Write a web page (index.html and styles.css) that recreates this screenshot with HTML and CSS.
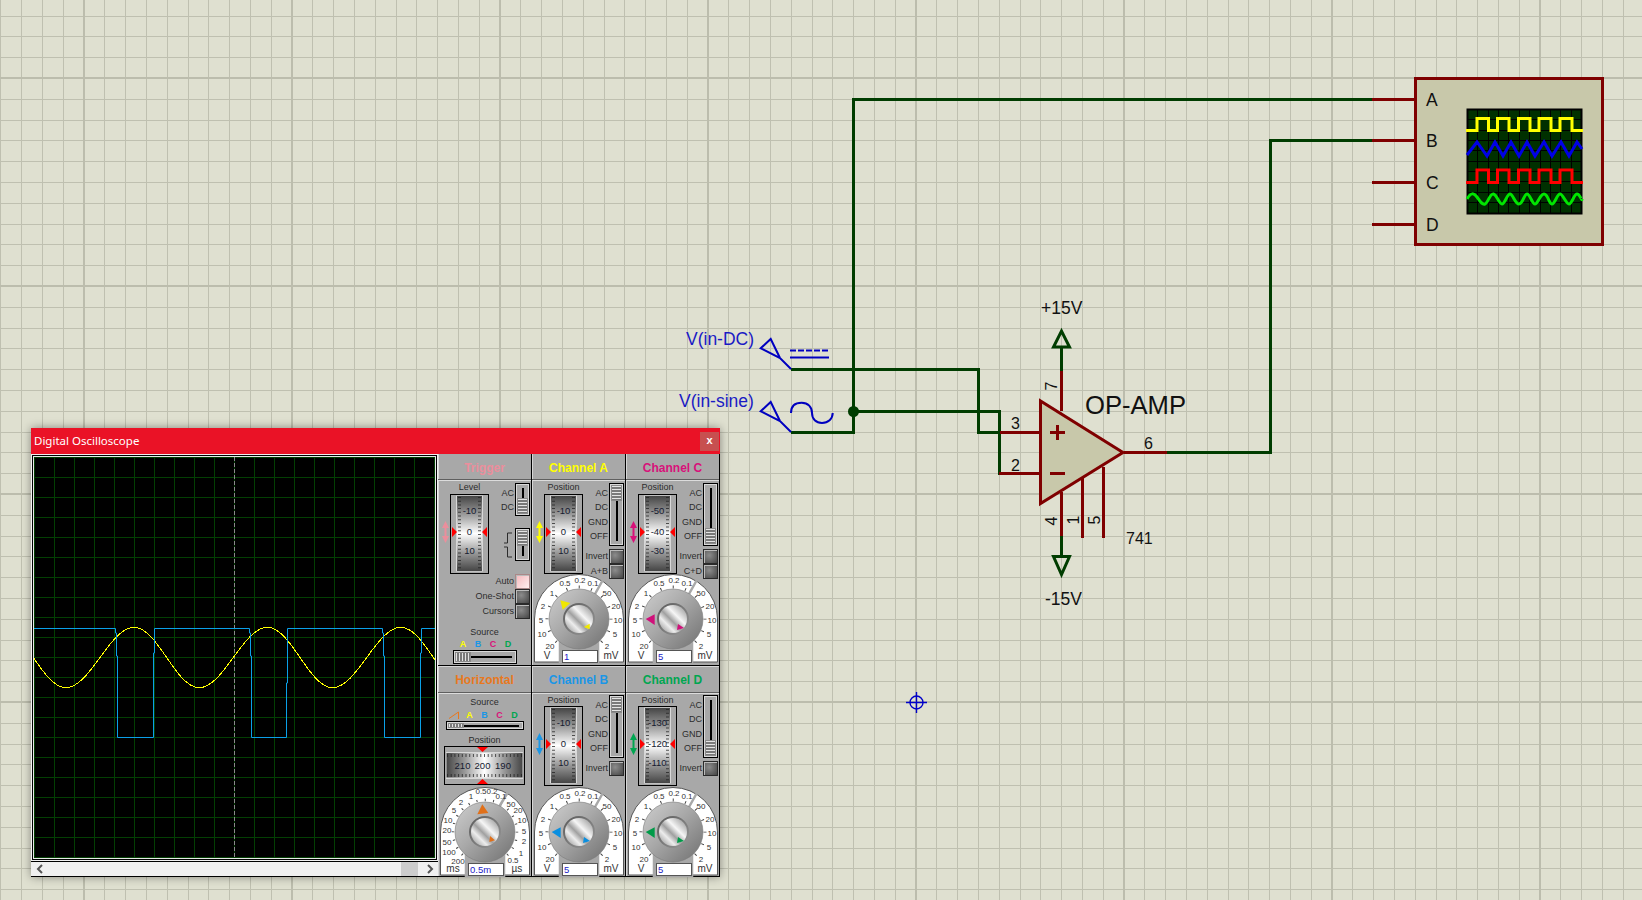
FILE: index.html
```html
<!DOCTYPE html>
<html lang="en">
<head>
<meta charset="utf-8">
<title>Digital Oscilloscope</title>
<link rel="stylesheet" href="styles.css">
</head>
<body class="app">

<svg class="defs" width="0" height="0" aria-hidden="true">
  <defs>
    <pattern id="sheet-grid" width="208" height="208" patternUnits="userSpaceOnUse">
      <path class="grid-minor" d="M.5 0V208M21.5 0V208M42.5 0V208M63.5 0V208M104.5 0V208M125.5 0V208M146.5 0V208M167.5 0V208M188.5 0V208"/>
      <path class="grid-minor" d="M0 16.5H208M0 36.5H208M0 57.5H208M0 99.5H208M0 120.5H208M0 140.5H208M0 161.5H208M0 182.5H208M0 203.5H208"/>
      <path class="grid-major" d="M84 0V208M0 78H208"/>
    </pattern>
    <pattern id="scope-grid" width="20" height="20" patternUnits="userSpaceOnUse">
      <path class="scope-line" d="M.5 0V20M0 .5H20"/>
    </pattern>
    <linearGradient id="roll-v" x1="0" y1="0" x2="0" y2="1">
      <stop offset="0" stop-color="#454545"/><stop offset=".25" stop-color="#9c9c9c"/>
      <stop offset=".5" stop-color="#ffffff"/><stop offset=".75" stop-color="#9c9c9c"/>
      <stop offset="1" stop-color="#454545"/>
    </linearGradient>
    <linearGradient id="roll-h" x1="0" y1="0" x2="1" y2="0">
      <stop offset="0" stop-color="#454545"/><stop offset=".25" stop-color="#9c9c9c"/>
      <stop offset=".5" stop-color="#ffffff"/><stop offset=".75" stop-color="#9c9c9c"/>
      <stop offset="1" stop-color="#454545"/>
    </linearGradient>
    <linearGradient id="knob-body" x1="0" y1="0" x2="1" y2="1">
      <stop offset="0" stop-color="#cfcfcf"/><stop offset=".45" stop-color="#a8a8a8"/>
      <stop offset=".85" stop-color="#7f7f7f"/><stop offset="1" stop-color="#9a9a9a"/>
    </linearGradient>
    <linearGradient id="knob-ring" x1="0" y1="0" x2="1" y2="1">
      <stop offset="0" stop-color="#5a5a5a"/><stop offset="1" stop-color="#9a9a9a"/>
    </linearGradient>
    <linearGradient id="knob-cap" x1="0" y1="1" x2="1" y2="0">
      <stop offset="0" stop-color="#808080"/><stop offset=".3" stop-color="#ededed"/>
      <stop offset=".45" stop-color="#a0a0a0"/><stop offset=".62" stop-color="#f6f6f6"/>
      <stop offset="1" stop-color="#858585"/>
    </linearGradient>

    <g id="roller">
      <rect class="frame-out" x=".5" y=".5" width="38" height="79"/>
      <rect class="frame-in" x="6" y="1.5" width="27" height="76"/>
      <rect x="7" y="2" width="25" height="75" fill="url(#roll-v)"/>
      <line class="roll-tick" x1="9.500" y1="3" x2="9.500" y2="76"/>
      <line class="roll-tick" x1="29.500" y1="3" x2="29.500" y2="76"/>
      <path class="red" d="M2 33V43L7 38ZM37 33V43L32 38Z"/>
    </g>

    <g id="knob">
      <circle cx="46" cy="47" r="30" fill="url(#knob-body)" stroke="#7a7a7a" stroke-width=".6"/>
      <circle cx="46" cy="47" r="16" fill="url(#knob-ring)"/>
      <circle cx="46" cy="47" r="14" fill="url(#knob-cap)"/>
    </g>

    <g id="dial-volts">
      <path class="dial-face" d="M1.5 90V47A44.5 44.5 0 0 1 90.5 47V90Z"/>
      <circle class="dial-ticks" cx="46" cy="47" r="32"/>
      <path class="dial-gap" d="M27 91V66H65V91ZM62 22L71 6" />
      <text class="dial-txt" x="47" y="11">0.2</text><text class="dial-txt" x="32" y="14">0.5</text>
      <text class="dial-txt" x="60" y="14">0.1</text><text class="dial-txt" x="19" y="24">1</text>
      <text class="dial-txt" x="10" y="37">2</text><text class="dial-txt" x="8" y="51">5</text>
      <text class="dial-txt" x="9" y="65">10</text><text class="dial-txt" x="17" y="77">20</text>
      <text class="dial-txt" x="74" y="24">50</text><text class="dial-txt" x="83" y="37">20</text>
      <text class="dial-txt" x="85" y="51">10</text><text class="dial-txt" x="82" y="65">5</text>
      <text class="dial-txt" x="74" y="77">2</text>
      <text class="dial-unit" x="14" y="87">V</text><text class="dial-unit" x="78" y="87">mV</text>
      <use href="#knob"/>
    </g>

    <g id="dial-time">
      <path class="dial-face" d="M1.5 90V47A44.5 44.5 0 0 1 90.5 47V90Z"/>
      <circle class="dial-ticks-fine" cx="46" cy="47" r="32"/>
      <path class="dial-gap" d="M27 91V66H65V91ZM60 22L69 7" />
      <text class="dial-txt" x="42" y="9">0.5</text><text class="dial-txt" x="53" y="9">0.2</text>
      <text class="dial-txt" x="62" y="14">0.1</text><text class="dial-txt" x="32" y="14">1</text>
      <text class="dial-txt" x="22" y="20">2</text><text class="dial-txt" x="15" y="28">5</text>
      <text class="dial-txt" x="9" y="38">10</text><text class="dial-txt" x="8" y="48">20</text>
      <text class="dial-txt" x="8" y="60">50</text><text class="dial-txt" x="10" y="70">100</text>
      <text class="dial-txt" x="19" y="79">200</text>
      <text class="dial-txt" x="72" y="22">50</text><text class="dial-txt" x="79" y="28">20</text>
      <text class="dial-txt" x="83" y="38">10</text><text class="dial-txt" x="85" y="49">5</text>
      <text class="dial-txt" x="85" y="59">2</text><text class="dial-txt" x="82" y="71">1</text>
      <text class="dial-txt" x="74" y="78">0.5</text>
      <text class="dial-unit" x="14" y="87">ms</text><text class="dial-unit" x="78" y="87">µs</text>
      <use href="#knob"/>
    </g>

    <g id="value-box">
      <rect class="value-box" x="29.5" y="78.5" width="35" height="12"/>
    </g>

    <path id="updown" d="M3.5 0L7 7H4.5V15H7L3.5 22L0 15H2.5V7H0Z"/>
  </defs>
</svg>

<svg class="schematic" viewBox="0 0 1642 900" width="1642" height="900">
  <rect width="1642" height="900" fill="url(#sheet-grid)"/>

  <g class="wire">
    <path d="M1372 99.5H853.5V432.5H791"/>
    <path d="M1372 140.5H1270.5V452.5H1167"/>
    <path d="M791 369.5H978.5V432.5H1000"/>
    <path d="M853.5 411.5H999.5V473.5H1000"/>
    <path d="M1061.5 371V347M1053.5 347H1069.5L1061.5 331Z"/>
    <path d="M1061.5 536V556.5M1053.5 556.5H1069.5L1061.5 574.5Z"/>
  </g>
  <circle cx="853.5" cy="411.5" r="5.5" class="junction"/>

  <g class="part">
    <rect x="1415.5" y="78.5" width="187" height="166"/>
    <path d="M1040.5 401V503.5L1123 452.5Z"/>
  </g>
  <g class="pin">
    <path d="M1372 99.5H1415M1372 140.5H1415M1372 182.5H1415M1372 224.5H1415"/>
    <path d="M1000 432.5H1040M999 473.5H1040M1124 452.5H1167"/>
    <path d="M1061.5 371V411M1061.5 492V536M1082.5 478V538M1103.5 467V538"/>
    <path d="M1050 432.5H1065M1057.5 425V440M1050 473.5H1065"/>
  </g>

  <rect class="la-screen" x="1467.5" y="109.5" width="114" height="104"/>
  <path class="la-grid" d="M1477.5 110V213M1488.5 110V213M1498.5 110V213M1508.5 110V213M1519.5 110V213M1529.5 110V213M1540.5 110V213M1550.5 110V213M1560.5 110V213M1571.5 110V213M1468 119.5H1581M1468 130.5H1581M1468 140.5H1581M1468 150.5H1581M1468 161.5H1581M1468 171.5H1581M1468 181.5H1581M1468 192.5H1581M1468 202.5H1581"/>
  <path class="trace t-yellow" d="M1466 130.5H1477V118.5H1488.5V130.5H1497.5V118.5H1509V130.5H1518.5V118.5H1530V130.5H1539V118.5H1551V130.5H1560V118.5H1572V130.5H1583"/>
  <path class="trace t-blue" d="M1467 155L1477 142L1487 156L1495 142L1503 156L1511 142L1519 156L1527 142L1535 156L1544 142L1552 156L1561 142L1569 156L1577 142L1582 149"/>
  <path class="trace t-red" d="M1466 182.5H1477V170H1488.5V182.5H1497.5V170H1509V182.5H1518.5V170H1530V182.5H1539V170H1551V182.5H1560V170H1572V182.5H1583"/>
  <path class="trace t-green" d="M1467 199C1471 192 1474 193 1477 197S1482 205 1485 204S1490 193 1493.5 194S1499 204 1502 204S1507 194 1510 194S1515 204 1519 204S1524 194 1527 194S1532 204 1535 204S1540 194 1544 194S1549 204 1552 204S1557 194 1560 194S1566 204 1569 204S1574 194 1577 194S1582 202 1582 199"/>

  <g class="blue-sym">
    <path d="M791 369L780 358L760.7 348.3L770.7 339L780 358"/>
    <path d="M791 432L780 421L760.7 411.3L770.7 402L780 421"/>
    <path d="M790 350.5H829" stroke-dasharray="6 2"/>
    <path d="M790 357.5H829"/>
    <path d="M791 413C791 405 796 402.7 801.7 402.7C808 402.7 812 407 812 413C812 419 816 423 822 423C828 423 832.7 419 832.7 413"/>
  </g>
  <text class="blue-label" x="686" y="345">V(in-DC)</text>
  <text class="blue-label" x="679" y="407">V(in-sine)</text>

  <text class="sch-label" x="1041" y="314">+15V</text>
  <text class="sch-label" x="1045" y="605">-15V</text>
  <text class="sch-title" x="1085" y="414">OP-AMP</text>
  <text class="sch-pin" x="1126" y="544">741</text>
  <text class="sch-pin" x="1011" y="429">3</text>
  <text class="sch-pin" x="1011" y="471">2</text>
  <text class="sch-pin" x="1144" y="449">6</text>
  <text class="sch-pin sch-mid" transform="translate(1057 386) rotate(-90)">7</text>
  <text class="sch-pin sch-mid" transform="translate(1057 521) rotate(-90)">4</text>
  <text class="sch-pin sch-mid" transform="translate(1079 520) rotate(-90)">1</text>
  <text class="sch-pin sch-mid" transform="translate(1100 520) rotate(-90)">5</text>
  <text class="sch-label" x="1426" y="106">A</text>
  <text class="sch-label" x="1426" y="147">B</text>
  <text class="sch-label" x="1426" y="189">C</text>
  <text class="sch-label" x="1426" y="231">D</text>

  <g class="cursor-mark">
    <circle cx="916.5" cy="702.5" r="6.5"/>
    <path d="M906 702.5H927M916.5 692V713"/>
  </g>
</svg>

<section class="scope-window">
  <header class="titlebar">
    <span class="title-text">Digital Oscilloscope</span>
    <span class="close-btn">x</span>
  </header>
  <div class="scope-body">
    <div class="screen-col">
      <div class="screen-frame">
        <svg class="screen" viewBox="0 0 401 401" width="401" height="401">
          <rect width="401" height="401" fill="#000"/>
          <rect width="401" height="401" fill="url(#scope-grid)"/>
          <path class="scope-line" d="M400.5 0V401M0 400.5H401"/>
          <path class="scope-center" d="M200.5 0V401"/>
          <path class="wave-a" d="M-33.4 170.3C-9.4 170.3 8 230.7 32 230.7S76 170.3 100 170.3S141.3 230.7 165.3 230.7S209.3 170.3 233.3 170.3S274.7 230.7 298.7 230.7S342.7 170.3 366.7 170.3S408 230.7 432 230.7"/>
          <path class="wave-b" d="M0 171.5H81.5V176H82.5V199H83.5V280.5H119.5V196H120.5V171.5H215.5V176H216.5V199H217.5V280.5H252.5V226H253.5V171.5H348.5V176H349.5V199H350.5V280.5H386.5V196H387.5V171.5H401"/>
        </svg>
      </div>
      <div class="scrollbar">
        <svg class="chev" viewBox="0 0 8 10" width="8" height="10"><path d="M6 1L2 5L6 9"/></svg>
        <span class="scroll-track"></span>
        <span class="scroll-thumb"></span>
        <svg class="chev" viewBox="0 0 8 10" width="8" height="10"><path d="M2 1L6 5L2 9"/></svg>
      </div>
    </div>

    <div class="panels">

      <article class="panel row1">
        <h2 class="panel-head c-trigger">Trigger</h2>
        <div class="trigger-body">
          <div class="controls controls-tall">
            <div class="arrow-col"><svg class="updown c-trigger" viewBox="0 0 7 22" width="7" height="22"><use href="#updown"/></svg></div>
            <div class="roller-col">
              <span class="cap">Level</span>
              <svg class="roller" viewBox="0 0 39 80" width="39" height="80">
                <use href="#roller"/>
                <text class="roll-num" x="19.5" y="20">-10</text>
                <text class="roll-num" x="19.5" y="41">0</text>
                <text class="roll-num" x="19.5" y="60">10</text>
              </svg>
            </div>
            <div class="side">
              <div class="side-top">
                <div class="mode-labels"><span>AC</span><span>DC</span></div>
                <div class="vslider vslider-short at-bottom"><span class="thumb"></span></div>
              </div>
              <div class="side-top edge-row">
                <svg class="edges" viewBox="0 0 8 26" width="8" height="26"><path d="M0 11H3.5V1H8M0 15H3.5V25H8"/></svg>
                <div class="vslider vslider-short"><span class="thumb"></span></div>
              </div>
              <div class="btn-row btn-first"><span class="btn-label">Auto</span><span class="btn btn-on"></span></div>
              <div class="btn-row"><span class="btn-label">One-Shot</span><span class="btn"></span></div>
              <div class="btn-row"><span class="btn-label">Cursors</span><span class="btn"></span></div>
            </div>
          </div>
          <div class="source">
            <span class="cap">Source</span>
            <div class="source-keys">
              <b class="c-a">A</b><b class="c-b">B</b><b class="c-c">C</b><b class="c-d">D</b>
            </div>
            <div class="hslider hslider-trig"><span class="thumb-h"></span></div>
          </div>
        </div>
      </article>

      <article class="panel row1">
        <h2 class="panel-head c-a">Channel A</h2>
        <div class="controls">
          <div class="arrow-col"><svg class="updown c-a" viewBox="0 0 7 22" width="7" height="22"><use href="#updown"/></svg></div>
          <div class="roller-col">
            <span class="cap">Position</span>
            <svg class="roller" viewBox="0 0 39 80" width="39" height="80">
              <use href="#roller"/>
              <text class="roll-num" x="19.5" y="20">-10</text>
              <text class="roll-num" x="19.5" y="41">0</text>
              <text class="roll-num" x="19.5" y="60">10</text>
            </svg>
          </div>
          <div class="side">
            <div class="side-top">
              <div class="mode-labels"><span>AC</span><span>DC</span><span>GND</span><span>OFF</span></div>
              <div class="vslider"><span class="thumb"></span></div>
            </div>
            <div class="btn-row btn-gap"><span class="btn-label">Invert</span><span class="btn"></span></div>
            <div class="btn-row"><span class="btn-label">A+B</span><span class="btn"></span></div>
          </div>
        </div>
        <svg class="dial" viewBox="0 0 92 91" width="92" height="91">
          <use href="#dial-volts"/><use href="#value-box"/>
          <text class="value-txt" x="31" y="88">1</text>
          <path class="c-a-fill" d="M27.3 28.3L37.3 31L29.7 37.7Z"/>
          <path class="c-a-fill" d="M50.7 55L56.7 51.7V57.3Z"/>
        </svg>
      </article>

      <article class="panel row1">
        <h2 class="panel-head c-c">Channel C</h2>
        <div class="controls">
          <div class="arrow-col"><svg class="updown c-c" viewBox="0 0 7 22" width="7" height="22"><use href="#updown"/></svg></div>
          <div class="roller-col">
            <span class="cap">Position</span>
            <svg class="roller" viewBox="0 0 39 80" width="39" height="80">
              <use href="#roller"/>
              <text class="roll-num" x="19.5" y="20">-50</text>
              <text class="roll-num" x="19.5" y="41">-40</text>
              <text class="roll-num" x="19.5" y="60">-30</text>
            </svg>
          </div>
          <div class="side">
            <div class="side-top">
              <div class="mode-labels"><span>AC</span><span>DC</span><span>GND</span><span>OFF</span></div>
              <div class="vslider at-bottom"><span class="thumb"></span></div>
            </div>
            <div class="btn-row btn-gap"><span class="btn-label">Invert</span><span class="btn"></span></div>
            <div class="btn-row"><span class="btn-label">C+D</span><span class="btn"></span></div>
          </div>
        </div>
        <svg class="dial" viewBox="0 0 92 91" width="92" height="91">
          <use href="#dial-volts"/><use href="#value-box"/>
          <text class="value-txt" x="31" y="88">5</text>
          <path class="c-c-fill" d="M18.7 47L27.7 42.3V53Z"/>
          <path class="c-c-fill" d="M51 52L57 56L50 58Z"/>
        </svg>
      </article>

      <article class="panel row2">
        <h2 class="panel-head c-h">Horizontal</h2>
        <div class="controls-h">
          <span class="cap">Source</span>
          <div class="source-keys source-keys-h">
            <svg class="ramp" viewBox="0 0 11 8" width="11" height="8"><path d="M0 7.5L9.5 1V8"/></svg>
            <b class="c-a">A</b><b class="c-b">B</b><b class="c-c">C</b><b class="c-d">D</b>
          </div>
          <div class="hslider hslider-time"><span class="thumb-h"></span></div>
          <span class="cap cap-pos">Position</span>
          <svg class="roller-h" viewBox="0 0 81 39" width="81" height="39">
            <rect class="frame-out" x=".5" y=".5" width="80" height="38"/>
            <rect class="frame-in" x="2" y="6" width="77" height="27"/>
            <rect x="2.5" y="7" width="76" height="24.5" fill="url(#roll-h)"/>
            <line class="roll-tick-h" x1="3" y1="9.5" x2="78" y2="9.5"/>
            <line class="roll-tick-h" x1="3" y1="29.5" x2="78" y2="29.5"/>
            <path class="red" d="M33 1H44L38.5 6ZM33 38H44L38.5 33Z"/>
            <text class="roll-num" x="18.5" y="23">210</text>
            <text class="roll-num" x="38.5" y="23">200</text>
            <text class="roll-num" x="59" y="23">190</text>
          </svg>
        </div>
        <svg class="dial" viewBox="0 0 92 91" width="92" height="91">
          <use href="#dial-time"/><use href="#value-box"/>
          <text class="value-txt" x="31" y="88">0.5m</text>
          <path class="c-h-fill" d="M43.3 19.3L38.3 29.3L49.3 28Z"/>
          <path class="c-h-fill" d="M51 51L56 55.3L50.3 57Z"/>
        </svg>
      </article>

      <article class="panel row2">
        <h2 class="panel-head c-b">Channel B</h2>
        <div class="controls">
          <div class="arrow-col"><svg class="updown c-b" viewBox="0 0 7 22" width="7" height="22"><use href="#updown"/></svg></div>
          <div class="roller-col">
            <span class="cap">Position</span>
            <svg class="roller" viewBox="0 0 39 80" width="39" height="80">
              <use href="#roller"/>
              <text class="roll-num" x="19.5" y="20">-10</text>
              <text class="roll-num" x="19.5" y="41">0</text>
              <text class="roll-num" x="19.5" y="60">10</text>
            </svg>
          </div>
          <div class="side">
            <div class="side-top">
              <div class="mode-labels"><span>AC</span><span>DC</span><span>GND</span><span>OFF</span></div>
              <div class="vslider"><span class="thumb"></span></div>
            </div>
            <div class="btn-row btn-gap"><span class="btn-label">Invert</span><span class="btn"></span></div>
          </div>
        </div>
        <svg class="dial" viewBox="0 0 92 91" width="92" height="91">
          <use href="#dial-volts"/><use href="#value-box"/>
          <text class="value-txt" x="31" y="88">5</text>
          <path class="c-b-fill" d="M18.7 47L27.7 42.3V53Z"/>
          <path class="c-b-fill" d="M51 52L57 56L50 58Z"/>
        </svg>
      </article>

      <article class="panel row2">
        <h2 class="panel-head c-d">Channel D</h2>
        <div class="controls">
          <div class="arrow-col"><svg class="updown c-d" viewBox="0 0 7 22" width="7" height="22"><use href="#updown"/></svg></div>
          <div class="roller-col">
            <span class="cap">Position</span>
            <svg class="roller" viewBox="0 0 39 80" width="39" height="80">
              <use href="#roller"/>
              <text class="roll-num" x="19.5" y="20">-130</text>
              <text class="roll-num" x="19.5" y="41">-120</text>
              <text class="roll-num" x="19.5" y="60">-110</text>
            </svg>
          </div>
          <div class="side">
            <div class="side-top">
              <div class="mode-labels"><span>AC</span><span>DC</span><span>GND</span><span>OFF</span></div>
              <div class="vslider at-bottom"><span class="thumb"></span></div>
            </div>
            <div class="btn-row btn-gap"><span class="btn-label">Invert</span><span class="btn"></span></div>
          </div>
        </div>
        <svg class="dial" viewBox="0 0 92 91" width="92" height="91">
          <use href="#dial-volts"/><use href="#value-box"/>
          <text class="value-txt" x="31" y="88">5</text>
          <path class="c-d-fill" d="M18.7 47L27.7 42.3V53Z"/>
          <path class="c-d-fill" d="M51 52L57 56L50 58Z"/>
        </svg>
      </article>

    </div>
  </div>
</section>

</body>
</html>
```

FILE: styles.css
```css
* { box-sizing: border-box; }
html, body { margin: 0; height: 100%; }
.app {
  position: relative;
  width: 1642px;
  height: 900px;
  overflow: hidden;
  background: #dfe0d0;
  font-family: "Liberation Sans", Arial, sans-serif;
}
.defs { position: absolute; width: 0; height: 0; }

/* schematic canvas */
.schematic { display: block; position: absolute; left: 0; top: 0; }
.grid-minor { stroke: #bfc0b0; stroke-width: 1; fill: none; }
.grid-major { stroke: #bcbdad; stroke-width: 2; fill: none; }
.wire path { stroke: #003d00; stroke-width: 3; fill: none; stroke-linejoin: miter; }
.junction { fill: #003d00; }
.part rect, .part path { fill: #c8c8aa; stroke: #7f0000; stroke-width: 3; stroke-linejoin: miter; }
.pin path { stroke: #7f0000; stroke-width: 3; fill: none; }
.la-screen { fill: #003000; stroke: #000; stroke-width: 2; }
.la-grid { stroke: #000; stroke-width: 1; fill: none; }
.trace { fill: none; stroke-width: 3; stroke-linejoin: miter; }
.t-yellow { stroke: #ffff00; }
.t-blue { stroke: #0000e6; }
.t-red { stroke: #ff0000; }
.t-green { stroke: #00e600; }
.blue-sym path { stroke: #0000c0; stroke-width: 2; fill: none; }
.blue-label { font-size: 17.5px; fill: #1a1ac4; }
.sch-label { font-size: 17.5px; fill: #111; }
.sch-title { font-size: 25.6px; fill: #111; }
.sch-pin { font-size: 16px; fill: #111; }
.sch-mid { text-anchor: middle; }
.cursor-mark circle, .cursor-mark path { fill: none; stroke: #0000c8; stroke-width: 1.4; }

/* window */
.scope-window {
  position: absolute;
  left: 31px;
  top: 428px;
  width: 689px;
  display: flex;
  flex-direction: column;
  box-shadow: 0 0 9px rgba(0, 0, 0, .4);
}
.titlebar {
  height: 26px;
  background: #ea1226;
  display: flex;
  align-items: center;
  justify-content: space-between;
  padding: 0 1px 2px 3px;
}
.title-text {
  color: #fff;
  font-family: "Noto Sans", sans-serif;
  font-size: 11.5px;
}
.close-btn {
  width: 19px;
  height: 19px;
  margin-top: 2px;
  background: #c75050;
  color: #fff;
  font: bold 11px/17px "Liberation Sans", sans-serif;
  text-align: center;
}
.scope-body { display: flex; align-items: flex-start; background: #a8a8a8; }

/* screen */
.screen-col { width: 407px; display: flex; flex-direction: column; }
.screen-frame {
  border: 1px solid #f0f0f0;
  background: #000;
  width: 407px;
  height: 407px;
  display: flex;
  align-items: center;
  justify-content: center;
}
.screen { display: block; outline: 1px solid #e8e8e8; }
.scope-line { stroke: #033f03; stroke-width: 1; fill: none; }
.scope-center { stroke: #8a8a8a; stroke-width: 1; stroke-dasharray: 4 2; fill: none; }
.wave-a { stroke: #ffff00; stroke-width: 1; fill: none; shape-rendering: crispEdges; }
.wave-b { stroke: #0aa0e8; stroke-width: 1; fill: none; }
.scrollbar {
  height: 16px;
  background: #f0f0f0;
  border-top: 1px solid #000;
  border-bottom: 1px solid #000;
  display: flex;
  align-items: center;
  padding: 0 4px 0 5px;
}
.scroll-track { flex: 1; }
.scroll-thumb { width: 17px; height: 14px; background: #cdcdcd; margin-right: 8px; }
.chev path { fill: none; stroke: #555; stroke-width: 2; }

/* panels */
.panels {
  display: grid;
  grid-template-columns: repeat(3, 94px);
  grid-template-rows: 212px 211px;
  width: 282px;
}
.panel {
  background: #a8a8a8;
  border-right: 1px solid #000;
  border-bottom: 1px solid #000;
  box-shadow: inset 1px 0 0 #d6d6d6;
  display: grid;
  grid-template-rows: 26px 92px 91px;
  color: #2c2c2c;
  min-width: 0;
}
.panel.row2 { grid-template-rows: 27px 92px 91px; box-shadow: inset 1px 1px 0 #d6d6d6; }
.panel.row1:first-child { display: flex; flex-direction: column; }
.panel-head {
  margin: 0;
  padding-top: 2px;
  font-size: 12px;
  font-weight: bold;
  display: flex;
  align-items: center;
  justify-content: center;
  border-bottom: 1px solid #5f5f5f;
  box-shadow: 0 1px 0 #dcdcdc;
}
.panel.row1:first-child .panel-head { height: 26px; flex: none; }
.c-trigger { color: #eb8e9c; }
.c-a { color: #ffff00; }
.c-b { color: #1a96e6; }
.c-c { color: #d8127a; }
.c-d { color: #00a651; }
.c-h { color: #e8781e; }
.c-a-fill { fill: #f0e800; }
.c-b-fill { fill: #0a8fe0; }
.c-c-fill { fill: #d0107a; }
.c-d-fill { fill: #009a48; }
.c-h-fill { fill: #e0701a; }
.red { fill: #ff0000; }

.controls { display: flex; height: 92px; position: relative; z-index: 1; }
.controls-tall { height: 141px; }
.arrow-col { width: 12px; padding: 41px 0 0 4px; flex: none; }
.row2 .arrow-col { padding-top: 40px; }
.updown { display: block; fill: currentColor; }
.roller-col { width: 39px; flex: none; display: flex; flex-direction: column; align-items: center; }
.cap { display: block; height: 14px; font-size: 9px; line-height: 14px; text-align: center; color: #2c2c2c; }
.row2 .roller-col .cap { height: 13px; }
.roller { display: block; flex: none; }
.frame-out { fill: #a8a8a8; stroke: #000; stroke-width: 1; }
.frame-in { fill: #d8d8d8; }
.roll-tick { stroke: #222; stroke-opacity: .75; stroke-width: 3; stroke-dasharray: 1 2.7; }
.roll-tick-h { stroke: #222; stroke-opacity: .75; stroke-width: 3; stroke-dasharray: 1 2.7; }
.roll-num { font-size: 9.5px; text-anchor: middle; fill: #151a30; font-family: "Liberation Sans", sans-serif; }

.side {
  flex: 1;
  min-width: 0;
  padding: 3px 1px 0 0;
  display: flex;
  flex-direction: column;
  align-items: stretch;
}
.row2 .side { padding-top: 2px; }
.side-top { display: flex; justify-content: flex-end; gap: 1px; }
.mode-labels {
  display: flex;
  flex-direction: column;
  padding-top: 3px;
  font-size: 9px;
  line-height: 14.3px;
  text-align: right;
}
.vslider {
  width: 15px;
  height: 63px;
  flex: none;
  border: 1px solid #000;
  box-shadow: inset 0 0 0 1px #dadada;
  background: linear-gradient(#000, #000) center / 2px calc(100% - 8px) no-repeat, #a8a8a8;
  display: flex;
  flex-direction: column;
  padding: 1px;
}
.vslider-short { height: 33px; }
.at-bottom { justify-content: flex-end; }
.thumb {
  display: block;
  height: 16px;
  background: repeating-linear-gradient(#e4e4e4 0 1px, #7a7a7a 1px 3px);
  border: 1px solid #8a8a8a;
}
.edge-row { margin-top: 12px; align-items: center; gap: 3px; }
.edges path { fill: none; stroke: #2c2c2c; stroke-width: 1; }

.btn-row {
  display: flex;
  justify-content: flex-end;
  align-items: center;
  gap: 1px;
  height: 15px;
  white-space: nowrap;
}
.btn-gap { margin-top: 3px; }
.btn-first { margin-top: 13px; }
.btn-label { font-size: 9px; position: relative; top: -1px; }
.btn {
  width: 15px;
  height: 15px;
  flex: none;
  border: 1px solid #2a2a2a;
  background: radial-gradient(circle at 40% 40%, #8c8c8c, #444);
  box-shadow: inset 1px 1px 0 #bbb;
}
.btn-on { background: linear-gradient(135deg, #f6b8bc, #fff0f0); border-color: #a88; }

.trigger-body { display: flex; flex-direction: column; }
.source { display: flex; flex-direction: column; align-items: center; padding-top: 5px; }
.source .cap { height: 13px; line-height: 13px; }
.source-keys { display: flex; gap: 4px; height: 11px; padding-left: 2px; }
.source-keys b { width: 11px; font-size: 9px; line-height: 11px; text-align: center; }
.hslider {
  height: 14px;
  border: 1px solid #000;
  box-shadow: inset 0 0 0 1px #dadada;
  background: linear-gradient(#000, #000) center / calc(100% - 8px) 2px no-repeat, #a8a8a8;
  padding: 1px;
  display: flex;
}
.hslider-trig { width: 64px; }
.hslider-time { width: 78px; }
.thumb-h {
  display: block;
  width: 16px;
  background: repeating-linear-gradient(90deg, #e4e4e4 0 1px, #7a7a7a 1px 3px);
  border: 1px solid #8a8a8a;
}

.controls-h {
  height: 92px;
  padding-top: 3px;
  display: flex;
  flex-direction: column;
  align-items: center;
  position: relative;
  z-index: 1;
}
.controls-h .cap { height: 13px; line-height: 13px; flex: none; }
.controls-h .cap-pos { height: 12px; margin-top: 4px; }
.source-keys-h { height: 12px; flex: none; align-items: center; gap: 4px; padding: 0; }
.ramp { display: block; }
.ramp path { fill: none; stroke: #e8781e; stroke-width: 1; }
.roller-h { display: block; flex: none; }

.dial { display: block; margin-left: 1px; overflow: visible; }
.dial-face { fill: #fff; stroke: #555; stroke-width: 1; }
.dial-ticks { fill: none; stroke: #444; stroke-width: 3; stroke-dasharray: 1 11.566; stroke-dashoffset: .5; }
.dial-ticks-fine { fill: none; stroke: #444; stroke-width: 2.5; stroke-dasharray: 1 7.378; stroke-dashoffset: .5; }
.dial-gap { fill: #a8a8a8; stroke: #a8a8a8; stroke-width: 2.5; }
.dial-txt { font-size: 8px; text-anchor: middle; fill: #333; font-family: "Liberation Sans", sans-serif; }
.dial-unit { font-size: 10px; text-anchor: middle; fill: #333; font-family: "Liberation Sans", sans-serif; }
.value-box { fill: #fff; stroke: #555; stroke-width: 1; }
.value-txt { font-size: 9.5px; fill: #2222c8; font-family: "Liberation Sans", sans-serif; }
```
